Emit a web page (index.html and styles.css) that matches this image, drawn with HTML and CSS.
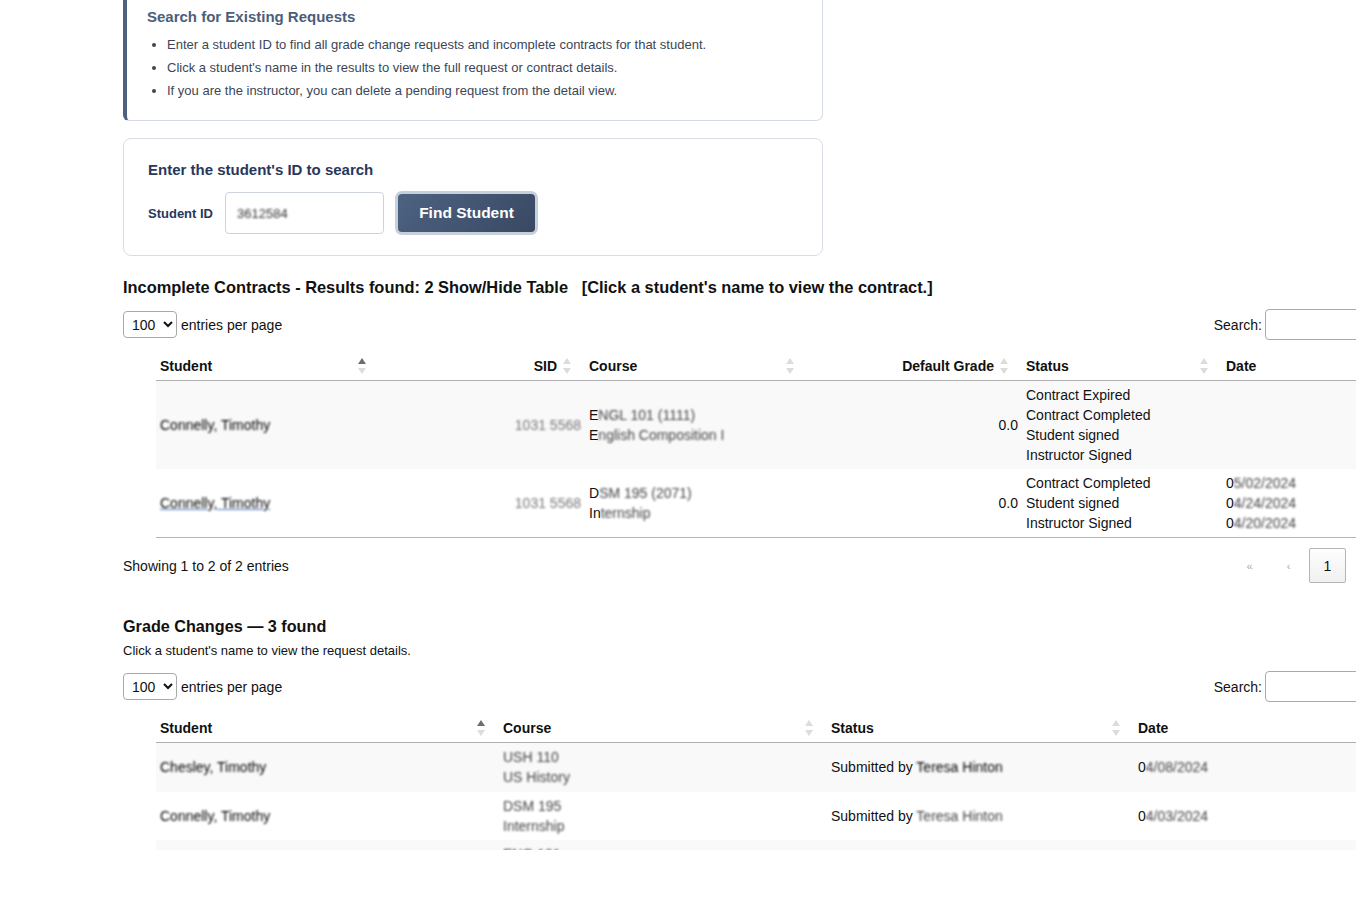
FILE: index.html
```html
<!DOCTYPE html>
<html lang="en">
<head>
    <meta charset="UTF-8">
    <meta name="viewport" content="width=device-width, initial-scale=1.0">
    <title>Search Requests</title>
    <link rel="stylesheet" href="styles.css">
</head>
<body>

<div class="page">
<div class="container">

    <div class="info-box">
        <h3>Search for Existing Requests</h3>
        <ul>
            <li>Enter a student ID to find all grade change requests and incomplete contracts for that student.</li>
            <li>Click a student's name in the results to view the full request or contract details.</li>
            <li>If you are the instructor, you can delete a pending request from the detail view.</li>
        </ul>
    </div>

    <div class="search-card">
        <h3>Enter the student's ID to search</h3>
        <form class="search-row" onsubmit="return false">
            <label for="sid">Student ID</label>
            <div class="id-input"><span class="blur">3612584</span></div>
            <button type="submit" class="find-btn">Find Student</button>
        </form>
    </div>

    <h2 class="results-title">Incomplete Contracts - Results found: 2 <a href="#">Show/Hide Table</a>&nbsp;&nbsp; [Click a student's name to view the contract.]</h2>

    <div class="dt-wrapper">
        <div class="dt-top">
            <div class="dt-length">
                <select><option>100</option></select>
                <span>entries per page</span>
            </div>
            <div class="dt-search">
                <span>Search:</span>
                <input type="search">
            </div>
        </div>

        <table class="dt">
            <colgroup>
                <col style="width:224px">
                <col style="width:205px">
                <col style="width:223px">
                <col style="width:214px">
                <col style="width:200px">
                <col style="width:201px">
            </colgroup>
            <thead>
                <tr>
                    <th><div class="th-in"><span>Student</span><svg class="sort asc" width="8" height="16" viewBox="0 0 8 16"><polygon class="up" points="0,6 4,0 8,6"/><polygon class="down" points="0,10 4,16 8,10"/></svg></div></th>
                    <th class="num"><div class="th-in"><span>SID</span><svg class="sort" width="8" height="16" viewBox="0 0 8 16"><polygon class="up" points="0,6 4,0 8,6"/><polygon class="down" points="0,10 4,16 8,10"/></svg></div></th>
                    <th><div class="th-in"><span>Course</span><svg class="sort" width="8" height="16" viewBox="0 0 8 16"><polygon class="up" points="0,6 4,0 8,6"/><polygon class="down" points="0,10 4,16 8,10"/></svg></div></th>
                    <th class="num"><div class="th-in"><span>Default Grade</span><svg class="sort" width="8" height="16" viewBox="0 0 8 16"><polygon class="up" points="0,6 4,0 8,6"/><polygon class="down" points="0,10 4,16 8,10"/></svg></div></th>
                    <th><div class="th-in"><span>Status</span><svg class="sort" width="8" height="16" viewBox="0 0 8 16"><polygon class="up" points="0,6 4,0 8,6"/><polygon class="down" points="0,10 4,16 8,10"/></svg></div></th>
                    <th><div class="th-in"><span>Date</span></div></th>
                </tr>
            </thead>
            <tbody>
                <tr class="odd">
                    <td><a href="#" class="name"><span class="blur dark">Connelly, Timothy</span></a></td>
                    <td class="num"><span class="blur light">1031 5568</span></td>
                    <td>E<span class="blur">NGL 101 (1111)</span><br>E<span class="blur">nglish Composition I</span></td>
                    <td class="num">0.0</td>
                    <td>Contract Expired<br>Contract Completed<br>Student signed<br>Instructor Signed</td>
                    <td></td>
                </tr>
                <tr>
                    <td><a href="#" class="name hover"><span class="blur dark">Connelly, Timothy</span></a></td>
                    <td class="num"><span class="blur light">1031 5568</span></td>
                    <td>D<span class="blur">SM 195 (2071)</span><br>In<span class="blur">ternship</span></td>
                    <td class="num">0.0</td>
                    <td>Contract Completed<br>Student signed<br>Instructor Signed</td>
                    <td>0<span class="blur">5/02/2024</span><br>0<span class="blur">4/24/2024</span><br>0<span class="blur">4/20/2024</span></td>
                </tr>
            </tbody>
        </table>

        <div class="dt-bottom">
            <div class="dt-info">Showing 1 to 2 of 2 entries</div>
            <div class="dt-paging">
                <span class="page-btn disabled">«</span>
                <span class="page-btn disabled">‹</span>
                <span class="page-btn current">1</span>
            </div>
        </div>
    </div>

    <h2 class="section-title">Grade Changes — 3 found</h2>
    <p class="section-note">Click a student's name to view the request details.</p>

    <div class="dt-wrapper second">
        <div class="dt-top">
            <div class="dt-length">
                <select><option>100</option></select>
                <span>entries per page</span>
            </div>
            <div class="dt-search">
                <span>Search:</span>
                <input type="search">
            </div>
        </div>

        <table class="dt grade">
            <colgroup>
                <col style="width:343px">
                <col style="width:328px">
                <col style="width:307px">
                <col style="width:289px">
            </colgroup>
            <thead>
                <tr>
                    <th><div class="th-in"><span>Student</span><svg class="sort asc" width="8" height="16" viewBox="0 0 8 16"><polygon class="up" points="0,6 4,0 8,6"/><polygon class="down" points="0,10 4,16 8,10"/></svg></div></th>
                    <th><div class="th-in"><span>Course</span><svg class="sort" width="8" height="16" viewBox="0 0 8 16"><polygon class="up" points="0,6 4,0 8,6"/><polygon class="down" points="0,10 4,16 8,10"/></svg></div></th>
                    <th><div class="th-in"><span>Status</span><svg class="sort" width="8" height="16" viewBox="0 0 8 16"><polygon class="up" points="0,6 4,0 8,6"/><polygon class="down" points="0,10 4,16 8,10"/></svg></div></th>
                    <th><div class="th-in"><span>Date</span></div></th>
                </tr>
            </thead>
            <tbody>
                <tr class="odd">
                    <td><a href="#" class="name"><span class="blur dark">Chesley, Timothy</span></a></td>
                    <td><span class="blur">USH 110</span><br><span class="blur">US History</span></td>
                    <td>Submitted by <span class="blur dark">Teresa Hinton</span></td>
                    <td>0<span class="blur">4/08/2024</span></td>
                </tr>
                <tr>
                    <td><a href="#" class="name"><span class="blur dark">Connelly, Timothy</span></a></td>
                    <td><span class="blur">DSM 195</span><br><span class="blur">Internship</span></td>
                    <td>Submitted by <span class="blur">Teresa Hinton</span></td>
                    <td>0<span class="blur">4/03/2024</span></td>
                </tr>
                <tr class="odd">
                    <td><a href="#" class="name"><span class="blur dark">Connelly, Timothy</span></a></td>
                    <td><span class="blur">ENG 101</span><br><span class="blur">Composition</span></td>
                    <td>Division Chair Approved</td>
                    <td>0<span class="blur">3/28/2024</span></td>
                </tr>
            </tbody>
        </table>
    </div>

</div>
</div>

</body>
</html>
```

FILE: styles.css
```css
html, body {
    margin: 0;
    padding: 0;
    background: #fff;
}
body {
    font-family: "Liberation Sans", Arial, sans-serif;
    color: #111;
    font-size: 14px;
}
.page {
    width: 1356px;
    height: 850px;
    overflow: hidden;
}
.container {
    margin-left: 123px;
    width: 1300px;
}

/* info box */
.info-box {
    width: 700px;
    box-sizing: border-box;
    margin-top: -13px;
    padding: 20px 20px 18px 20px;
    border: 1px solid #d5dbe4;
    border-left: 4px solid #4d6282;
    border-radius: 0 0 7px 6px;
}
.info-box h3 {
    margin: 0;
    font-size: 15px;
    line-height: 18px;
    color: #4b5e7a;
}
.info-box ul {
    margin: 7px 0 0 0;
    padding-left: 20px;
}
.info-box li {
    font-size: 13px;
    line-height: 23px;
    color: #3c4656;
}

/* search card */
.search-card {
    width: 700px;
    box-sizing: border-box;
    margin-top: 17px;
    padding: 22px 24px 20px 24px;
    border: 1px solid #d9dee6;
    border-radius: 8px;
}
.search-card h3 {
    margin: 0;
    font-size: 15px;
    line-height: 18px;
    color: #28385a;
}
.search-row {
    display: flex;
    align-items: center;
    margin-top: 12px;
}
.search-row label {
    font-size: 13px;
    font-weight: bold;
    color: #28385a;
    margin-right: 12px;
}
.id-input {
    width: 159px;
    height: 42px;
    box-sizing: border-box;
    border: 1px solid #cdd3dd;
    border-radius: 4px;
    padding: 0 11px;
    display: flex;
    align-items: center;
    font-size: 13px;
}
.id-input .blur {
    color: #333;
}
.find-btn {
    margin-left: 11px;
    width: 143px;
    height: 44px;
    box-sizing: border-box;
    border: 3px solid #c7cfda;
    border-radius: 7px;
    background: linear-gradient(135deg, #4d6382, #394862);
    color: #fff;
    font-family: "Liberation Sans", Arial, sans-serif;
    font-size: 15.5px;
    font-weight: bold;
    cursor: pointer;
}

/* headings */
.results-title {
    margin: 22px 0 0 0;
    font-size: 16.4px;
    line-height: 18px;
    font-weight: bold;
}
.results-title a {
    color: inherit;
    text-decoration: none;
}
.section-title {
    margin: 34px 0 0 0;
    font-size: 16.2px;
    line-height: 18px;
    font-weight: bold;
}
.section-note {
    margin: 8px 0 0 0;
    font-size: 13px;
    line-height: 16px;
}

/* datatable */
.dt-wrapper {
    width: 1300px;
}
.dt-top {
    display: flex;
    justify-content: space-between;
    align-items: center;
    margin-top: 13px;
    height: 31px;
}
.second .dt-top {
    margin-top: 12px;
}
.dt-length {
    display: flex;
    align-items: center;
    gap: 4px;
}
.dt-length select {
    width: 54px;
    height: 27px;
    border: 1px solid #aaa;
    border-radius: 4px;
    background: #fff;
    font-family: "Liberation Sans", Arial, sans-serif;
    font-size: 14px;
    padding: 0 4px;
    color: #111;
}
.dt-search {
    display: flex;
    align-items: center;
    gap: 3px;
}
.dt-search input {
    width: 158px;
    height: 31px;
    box-sizing: border-box;
    border: 1px solid #aaa;
    border-radius: 4px;
    margin: 0;
}

table.dt {
    margin-top: 12px;
    margin-left: 33px;
    width: 1267px;
    table-layout: fixed;
    border-collapse: collapse;
    border-bottom: 1px solid #b5b5b5;
}
table.dt.grade {
    border-bottom: none;
}
.dt th {
    font-size: 14px;
    font-weight: bold;
    text-align: left;
    padding: 4px 14px 4px 4px;
    line-height: 20px;
    border-bottom: 1px solid #b0b0b0;
}
.th-in {
    display: flex;
    align-items: center;
    justify-content: space-between;
}
.dt th.num .th-in {
    justify-content: flex-end;
    gap: 6px;
}
.sort {
    display: block;
}
.sort polygon {
    fill: #dcdcdc;
}
.sort.asc .up {
    fill: #6e6e6e;
}
.dt td {
    padding: 4px;
    line-height: 20px;
    vertical-align: middle;
    font-size: 14px;
    color: #111;
}
.dt.grade td {
    padding: 4px 4px 4.5px 4px;
}
.dt td.num {
    text-align: right;
}
.dt tr.odd td {
    background: #f9f9f9;
}
a.name {
    color: #222;
    text-decoration: none;
}
a.name.hover {
    text-decoration: underline;
    text-decoration-color: #4a78b8;
}
.blur {
    filter: blur(1px);
    color: #444;
}
.blur.dark {
    color: #000;
}
.blur.light {
    color: #777;
}

.dt-bottom {
    display: flex;
    justify-content: space-between;
    align-items: center;
    margin-top: 10px;
    width: 1223px;
}
.dt-paging {
    display: flex;
    align-items: center;
}
.page-btn {
    display: inline-flex;
    align-items: center;
    justify-content: center;
    min-width: 37px;
    height: 35px;
    box-sizing: border-box;
    font-size: 14px;
    margin-left: 2px;
}
.page-btn.disabled {
    color: #aaa;
    font-size: 11px;
}
.page-btn.current {
    border: 1px solid #b4b4b4;
    border-radius: 2px;
    background: linear-gradient(#fefefe, #f0f0f0);
    color: #111;
}
```
